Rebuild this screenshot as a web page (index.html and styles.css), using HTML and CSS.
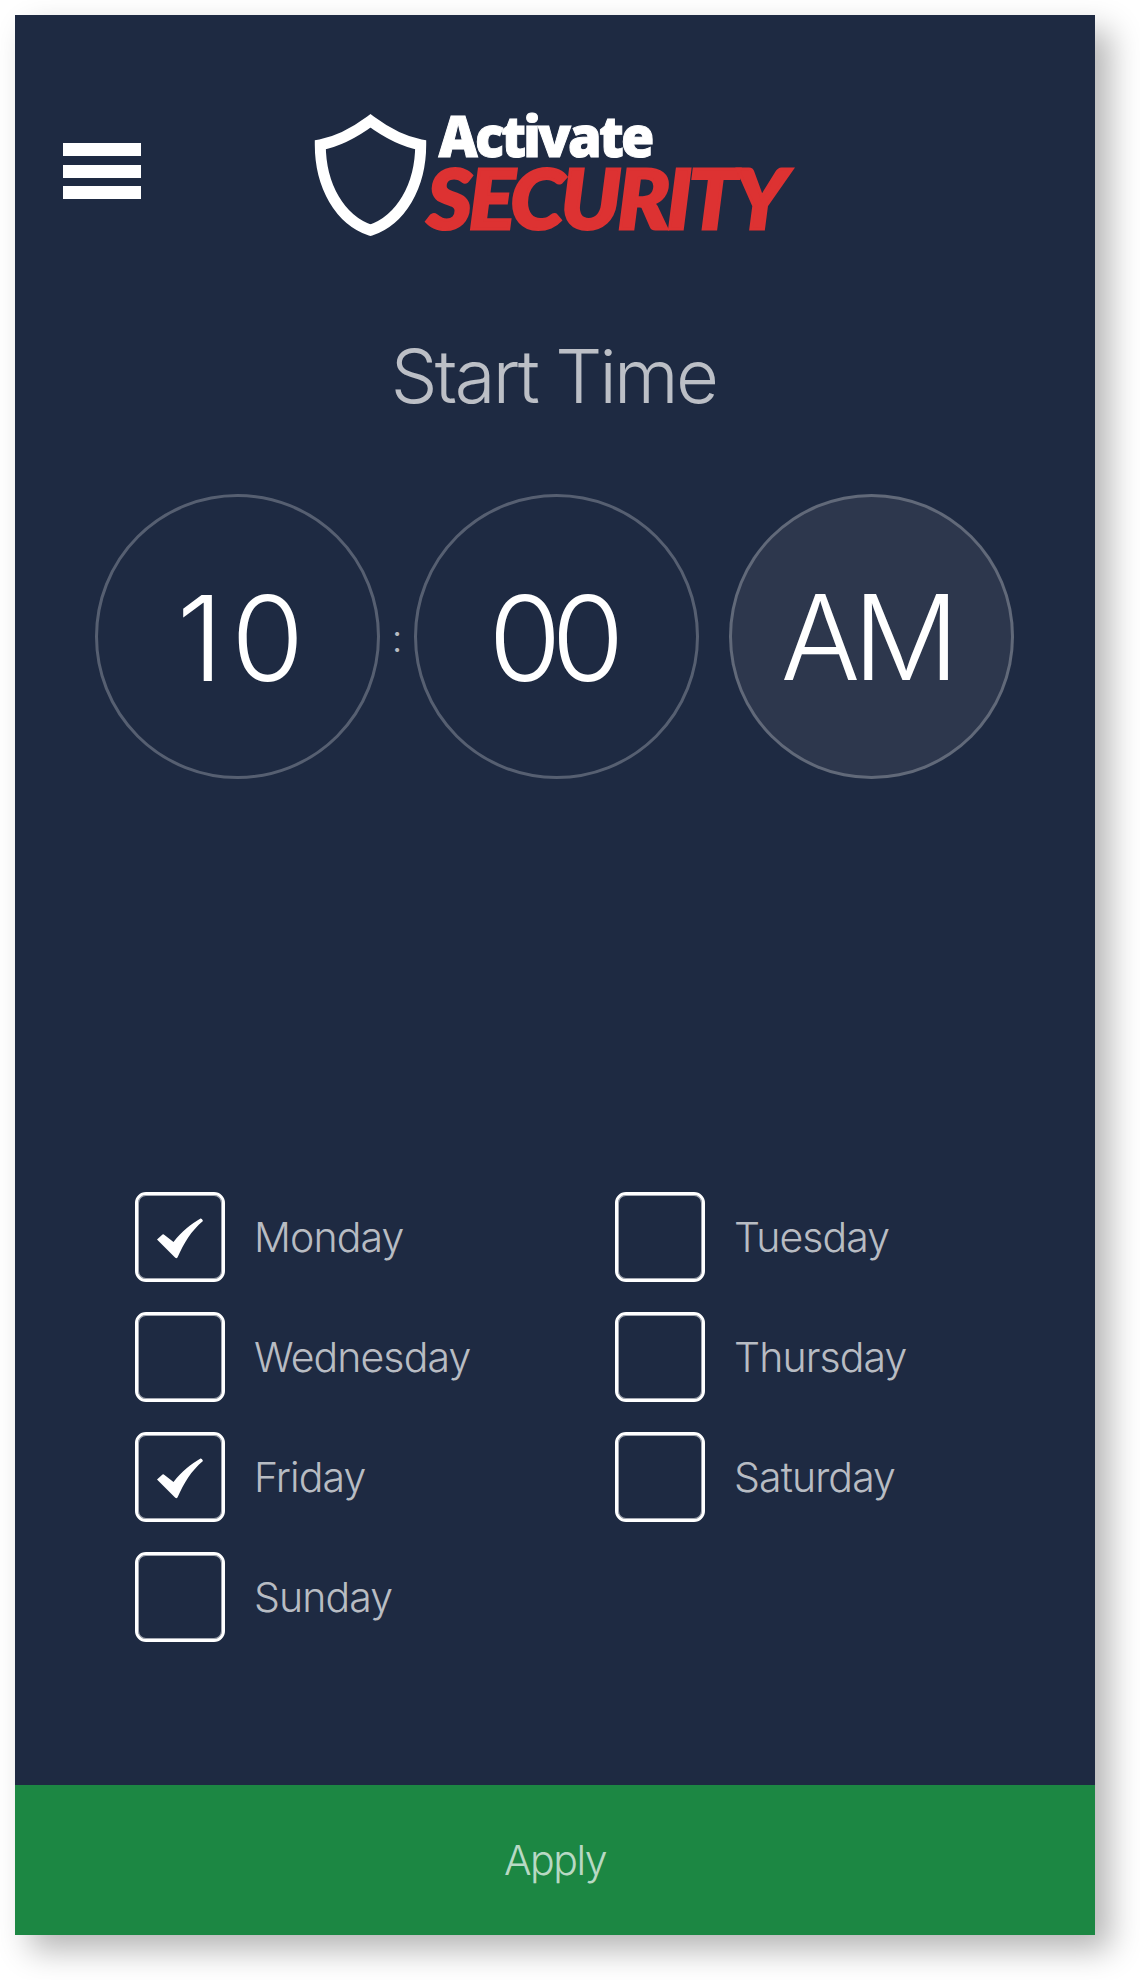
FILE: index.html
```html
<!DOCTYPE html>
<html lang="en">

<head>
    <meta charset="UTF-8">
    <meta name="viewport" content="width=device-width, initial-scale=1.0">
    <title>Activate Security</title>
    <link rel="stylesheet" href="styles.css">
</head>

<body>
    <div class="screen">
        <div class="header">
            <div class="menu">
                <span></span>
                <span></span>
                <span></span>
            </div>
            <svg class="logo" width="484" height="136" viewBox="0 0 484 136">
                <path class="shield" d="M55.500 20.800C72 33 91 42 105.700 44.800C105.700 86 86 120 55.500 130.300C25 120 5.300 86 5.300 44.800C20 42 39 33 55.500 20.800Z" />
                <text class="logo-top" x="123.500" y="56.800" textLength="213" lengthAdjust="spacingAndGlyphs">Activate</text>
                <text class="logo-bottom" x="112" y="129.200" textLength="357" lengthAdjust="spacingAndGlyphs">SECURITY</text>
            </svg>
        </div>

        <h1 class="title">Start Time</h1>

        <div class="time">
            <div class="circle hour">10</div>
            <div class="colon">:</div>
            <div class="circle minute">00</div>
            <div class="circle ampm">AM</div>
        </div>

        <div class="days">
            <div class="day">
                <div class="box">
                    <svg width="48" height="44" viewBox="0 0 48 44"><path d="M1 24.500L6.500 19.500Q7.500 19 8.500 20L17.500 27C26 16 35 9 44.500 3.500Q46 3 47 6C35 16 28 28 21.500 42.500Q20 44 18.500 42Z" /></svg>
                </div>
                <span>Monday</span>
            </div>
            <div class="day">
                <div class="box"></div>
                <span>Tuesday</span>
            </div>
            <div class="day">
                <div class="box"></div>
                <span>Wednesday</span>
            </div>
            <div class="day">
                <div class="box"></div>
                <span>Thursday</span>
            </div>
            <div class="day">
                <div class="box">
                    <svg width="48" height="44" viewBox="0 0 48 44"><path d="M1 24.500L6.500 19.500Q7.500 19 8.500 20L17.500 27C26 16 35 9 44.500 3.500Q46 3 47 6C35 16 28 28 21.500 42.500Q20 44 18.500 42Z" /></svg>
                </div>
                <span>Friday</span>
            </div>
            <div class="day">
                <div class="box"></div>
                <span>Saturday</span>
            </div>
            <div class="day">
                <div class="box"></div>
                <span>Sunday</span>
            </div>
        </div>

        <div class="apply">Apply</div>
    </div>
</body>

</html>
```
FILE: styles.css
```css
body {
    margin: 0;
    padding: 15px 15px 45px;
    background-color: #fff;
    font-family: "Inter", "Liberation Sans", sans-serif;
    font-weight: 300;
}

.screen {
    width: 1080px;
    height: 1920px;
    display: flex;
    flex-direction: column;
    background-color: #1e2a42;
    color: rgba(255, 255, 255, 0.7);
    box-shadow: 15px 15px 30px rgba(0, 0, 0, 0.29);
}

.header {
    height: 136px;
    padding: 85px 48px 0;
    display: flex;
    align-items: flex-start;
}

.menu {
    width: 78px;
    padding-top: 43px;
    display: flex;
    flex-direction: column;
    gap: 8.5px;
}

.menu span {
    height: 13px;
    background-color: #fff;
}

.logo {
    margin-left: 174px;
    overflow: visible;
}

.shield {
    fill: none;
    stroke: #fff;
    stroke-width: 11;
}

.logo-top {
    font-family: "Noto Sans", sans-serif;
    font-size: 57px;
    font-weight: 900;
    letter-spacing: -3px;
    fill: #fff;
    stroke: #fff;
    stroke-width: 1;
}

.logo-bottom {
    font-family: "Lato", sans-serif;
    font-size: 82px;
    font-weight: 900;
    font-style: italic;
    letter-spacing: -3px;
    fill: #dd3232;
    stroke: #dd3232;
    stroke-width: 3;
}

.title {
    margin: 79px 0 0;
    height: 124px;
    line-height: 123px;
    text-align: center;
    font-size: 74px;
    font-weight: 300;
    letter-spacing: -2.7px;
    text-indent: -3px;
}

.time {
    margin-top: 55px;
    padding-left: 80px;
    display: flex;
    align-items: center;
}

.circle {
    box-sizing: border-box;
    width: 285px;
    height: 285px;
    border: 3px solid rgba(255, 255, 255, 0.25);
    border-radius: 50%;
    line-height: 283px;
    text-align: center;
    font-size: 118px;
    color: #fff;
}

.hour {
    padding-left: 14px;
    letter-spacing: 8px;
}

.minute {
    letter-spacing: -10px;
    text-indent: -10px;
}

.ampm {
    margin-left: 30px;
    line-height: 280px;
    letter-spacing: -7px;
    text-indent: -10px;
    background-color: #2d374d;
}

.colon {
    width: 34px;
    text-align: center;
    font-size: 38px;
    padding-top: 3px;
}

.days {
    margin-top: 413px;
    padding-left: 120px;
    display: grid;
    grid-template-columns: 480px 480px;
    row-gap: 30px;
}

.day {
    display: flex;
    align-items: center;
    gap: 29px;
    font-size: 41px;
    letter-spacing: -0.9px;
}

.box {
    box-sizing: border-box;
    width: 90px;
    height: 90px;
    display: flex;
    align-items: center;
    justify-content: center;
    border: 3px solid #fff;
    border-radius: 11px;
    box-shadow: inset 0 0 0 1px rgba(255, 255, 255, 0.6);
}

.box path {
    fill: #fff;
}

.apply {
    margin-top: auto;
    height: 150px;
    line-height: 150px;
    text-align: center;
    font-size: 41px;
    letter-spacing: -1.5px;
    background-color: #1c8743;
}
```
